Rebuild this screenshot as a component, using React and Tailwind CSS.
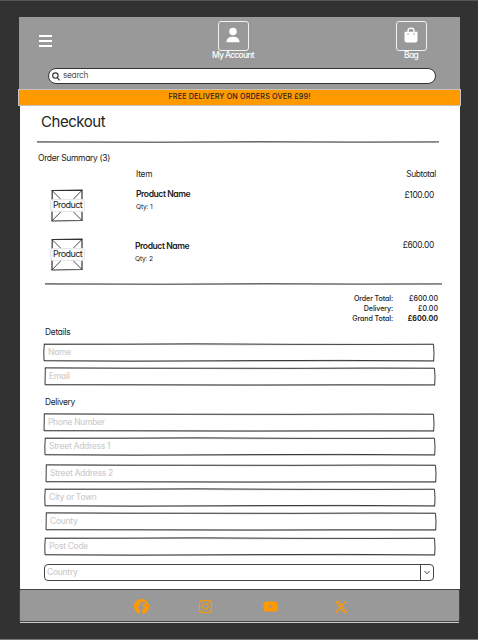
import React from "react";
import { FaFacebook, FaInstagram, FaYoutube, FaXTwitter } from "react-icons/fa6";

// Slightly uneven horizontal pen stroke.
function Rule({ width, className }) {
  return (
    <svg className={className} width={width} height="4" viewBox={`0 0 ${width} 4`} fill="none" stroke="#4a4a4a">
      <path strokeWidth="1" d={`M0 1.8 L${width * 0.3} 2.2 L${width * 0.55} 1.7 L${width * 0.8} 2.1 L${width} 1.9`} />
      <path strokeWidth=".4" d={`M0 2.4 L${width * 0.5} 2.3 L${width} 2.1`} />
    </svg>
  );
}

// Hand drawn outline around a form field.
function Outline({ flip }) {
  const a = flip ? 0.4 : 0;
  return (
    <svg className="absolute inset-0" width="392" height="19" fill="none" stroke="#3a3a3a">
      <path strokeWidth="1" d={`M1 ${1.3 - a} L80 1.2 L150 ${0.8 + a} L250 1.3 L330 ${1.4 - a} L390.5 1.2 L391 10 L390.7 18`} />
      <path strokeWidth="1" d={`M1.3 1 L${0.8 + a} 9 L1 17.8 L90 ${18.2 - a} L210 ${17.6 + a} L300 ${17.4 + a} L391 17.9`} />
      <path strokeWidth=".3" d="M0.5 .8 L200 1.8 L390 1.5 M1 17.4 L180 18.4 L391 18.2" />
    </svg>
  );
}

function Field({ label, className, flip }) {
  return (
    <div className={`relative flex h-[19px] w-[392px] shrink-0 items-center pb-[2px] pl-[5px] text-[8.4px] font-medium tracking-[-0.25px] text-[#cdcdcd] ${className}`}>
      <Outline flip={flip} />
      <span className="leading-[10px]">{label}</span>
    </div>
  );
}

function ProductImage() {
  return (
    <div className="relative flex h-[33px] w-[35px] items-center justify-center">
      <svg className="absolute inset-0" width="35" height="33" fill="none" stroke="#333">
        <path strokeWidth="1.2" d="M2 1.5 L32 1.2 L32 31.5 L2 32 L2.2 1" />
        <path strokeWidth=".9" d="M2 1.5 L32 31.5 M32 1.3 L2 31.8" />
      </svg>
      <span className="relative flex h-[13px] w-[35px] shrink-0 items-center justify-center rounded-[3px] border border-[#e5e5e5] bg-white/90 pb-[2px] text-[9px] leading-none tracking-[-0.6px] text-[#222]">
        Product
      </span>
    </div>
  );
}

function ProductRow({ qty, price, className, textClass, priceClass }) {
  return (
    <div className={`flex h-[33px] shrink-0 pl-[30px] pr-[26px] ${className}`}>
      <ProductImage />
      <div className={`flex flex-1 flex-col ${textClass}`}>
        <span className="text-[8.6px] font-semibold leading-[10px] tracking-[-0.45px]">Product Name</span>
        <span className="mt-[4px] text-[6.7px] leading-[9px] tracking-[-0.2px]">{qty}</span>
      </div>
      <span className={`text-[8.4px] leading-[10px] tracking-[-0.3px] ${priceClass}`}>{price}</span>
    </div>
  );
}

function Total({ label, value, bold }) {
  return (
    <div className="flex h-[10px] items-center justify-end text-[7.1px] font-medium leading-[10px]">
      <span className="tracking-[-0.1px]">{label}</span>
      <span className={bold ? "w-[45px] text-right font-bold" : "w-[45px] text-right"}>{value}</span>
    </div>
  );
}

function HeaderButton({ label, children }) {
  return (
    <div className="flex w-[46px] flex-col items-center text-white">
      <div className="flex h-[30px] w-[31px] shrink-0 items-center justify-center rounded-[3px] border border-[#f2f2f2]">{children}</div>
      <span className="-mt-[1px] whitespace-nowrap text-[8.4px] font-medium leading-[11px] tracking-[-0.65px]">{label}</span>
    </div>
  );
}

export default function App() {
  return (
    <div className="flex h-[640px] w-[478px] flex-col overflow-hidden border-b border-t border-b-[#777] border-t-[#555] bg-[#323232] pl-[18px] pt-[16px] font-['Inter','Liberation_Sans',sans-serif] text-[#222] [font-feature-settings:'cv11']">
      <div className="flex h-[606px] w-[443px] flex-col">
        <header className="ml-[1px] flex h-[72px] w-[441px] shrink-0 flex-col bg-[#999]">
          <div className="flex h-[44px] pl-[20px] pt-[4px]">
            <svg className="mt-[13px]" width="14" height="13" stroke="#fff" strokeWidth="2">
              <path d="M0 2H13M0 7H13M0 12H13" />
            </svg>
            <div className="ml-[157px]">
              <HeaderButton label="My Account">
                <svg className="mb-[2px]" width="14" height="16" fill="#fff" viewBox="0 0 15 17">
                  <circle cx="7.5" cy="4.7" r="4" />
                  <path d="M.5 16.3C.5 12 3.5 10.3 7.5 10.3S14.5 12 14.5 16.3Z" />
                </svg>
              </HeaderButton>
            </div>
            <div className="ml-[132px]">
              <HeaderButton label="Bag">
                <svg className="mb-[3px]" width="14" height="16" viewBox="0 0 14 16">
                  <path d="M4 5V3.7C4 .3 10 .3 10 3.7V5" fill="none" stroke="#fff" strokeWidth="1.4" />
                  <path d="M.5 4.7H13.5V13Q13.5 15.5 11 15.5H3Q.5 15.5 .5 13Z" fill="#fff" />
                  <circle cx="4" cy="7" r=".65" fill="#888" />
                  <circle cx="10" cy="7" r=".65" fill="#888" />
                </svg>
              </HeaderButton>
            </div>
          </div>
          <div className="ml-[29px] mt-[7px] flex h-[16px] w-[388px] shrink-0 items-center rounded-full border border-[#333] bg-white pl-[3px]">
            <svg width="8" height="9" viewBox="0 0 8 9" fill="none" stroke="#333" strokeWidth="1.1">
              <circle cx="3.4" cy="3.6" r="2.7" />
              <path d="M5.4 5.8L7.6 8.3" />
            </svg>
            <span className="ml-[3px] pb-[2px] text-[8.3px] leading-[10px] tracking-[-0.3px] text-[#555]">search</span>
          </div>
        </header>

        <div className="flex h-[17px] w-[443px] shrink-0 items-center justify-center border border-[#c8c4bc] bg-[#ff9900] text-[7.2px] font-medium tracking-[0.17px]">
          FREE DELIVERY ON ORDERS OVER £99!
        </div>

        <main className="ml-[2px] flex h-[483px] w-[440px] shrink-0 flex-col bg-white">
          <h1 className="ml-[21px] mt-[7px] h-[18px] text-[15px] leading-[18px] tracking-[-0.45px]">Checkout</h1>
          <Rule width={402} className="ml-[17px] mt-[9px] shrink-0" />
          <div className="ml-[18px] mt-[9px] h-[10px] text-[8.5px] leading-[10px] tracking-[-0.35px]">Order Summary (3)</div>
          <div className="mt-[6px] flex h-[10px] justify-between pl-[116px] pr-[24px] text-[8.3px] leading-[10px] tracking-[-0.2px]">
            <span>Item</span>
            <span className="tracking-[-0.35px]">Subtotal</span>
          </div>
          <ProductRow qty="Qty: 1" price="£100.00" className="mt-[10px]" textClass="ml-[51px] pt-0" priceClass="pt-[1px]" />
          <ProductRow qty="Qty: 2" price="£600.00" className="mt-[16px]" textClass="ml-[50px] pt-[3px]" priceClass="pt-[2px]" />
          <Rule width={397} className="ml-[25px] mt-[11px] shrink-0" />
          <div className="mt-[8px] flex flex-col pr-[22px]">
            <Total label="Order Total:" value="£600.00" />
            <Total label="Delivery:" value="£0.00" />
            <Total label="Grand Total:" value="£600.00" bold />
          </div>
          <h2 className="ml-[25px] mt-[3px] h-[10px] text-[8.4px] leading-[10px] tracking-[-0.25px]">Details</h2>
          <Field label="Name" className="ml-[23px] mt-[6px]" />
          <Field label="Email" className="ml-[24px] mt-[5px]" flip />
          <h2 className="ml-[25px] mt-[11px] h-[10px] text-[8.4px] leading-[10px] tracking-[-0.3px]">Delivery</h2>
          <Field label="Phone Number" className="ml-[23px] mt-[6px]" flip />
          <Field label="Street Address 1" className="ml-[24px] mt-[5px]" />
          <Field label="Street Address 2" className="ml-[25px] mt-[8px]" flip />
          <Field label="City or Town" className="ml-[24px] mt-[5px]" />
          <Field label="County" className="ml-[25px] mt-[5px]" flip />
          <Field label="Post Code" className="ml-[24px] mt-[6px]" />
          <div className="ml-[24px] mt-[8px] flex h-[17px] w-[390px] shrink-0 items-center rounded-[4px] border border-[#444] pl-[2px] text-[8.4px] font-medium tracking-[-0.25px] text-[#cdcdcd]">
            <span className="flex-1 pb-[2px] leading-[10px]">Country</span>
            <span className="flex h-full w-[13px] items-center justify-center border-l border-[#444]">
              <svg width="6" height="5" fill="none" stroke="#444" strokeWidth="1">
                <path d="M.5 1L3 3.8L5.5 1" />
              </svg>
            </span>
          </div>
        </main>

        <footer className="ml-[1px] flex h-[33px] w-[441px] shrink-0 items-center rounded-[2px] border border-[#444] bg-[#999] pl-[114px] pt-[2px] text-[#ff9900]">
          <FaFacebook size={15} />
          <FaInstagram size={15} className="ml-[49px]" />
          <FaYoutube size={15} className="ml-[50px]" />
          <FaXTwitter size={14} className="ml-[56px]" />
        </footer>
        <div className="ml-[2px] h-[1px] w-[439px] shrink-0 bg-[#ccc]" />
      </div>
    </div>
  );
}
